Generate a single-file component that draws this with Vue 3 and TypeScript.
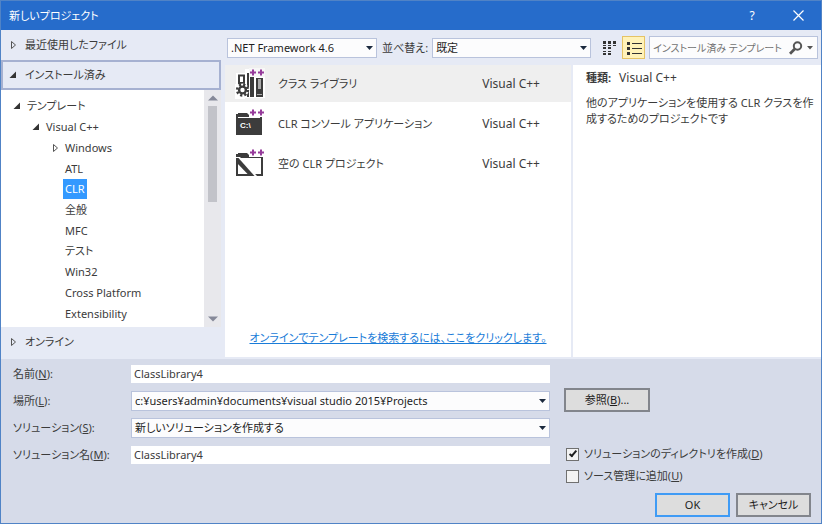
<script setup lang="ts">
import { ref } from 'vue'

interface TreeNode {
  label: string
  depth: number
  state?: 'open' | 'closed'
}

interface Template {
  name: string
  language: string
  icon: 'library' | 'console' | 'empty'
}

const nodes: TreeNode[] = [
  { label: 'テンプレート', depth: 0, state: 'open' },
  { label: 'Visual C++', depth: 1, state: 'open' },
  { label: 'Windows', depth: 2, state: 'closed' },
  { label: 'ATL', depth: 2 },
  { label: 'CLR', depth: 2 },
  { label: '全般', depth: 2 },
  { label: 'MFC', depth: 2 },
  { label: 'テスト', depth: 2 },
  { label: 'Win32', depth: 2 },
  { label: 'Cross Platform', depth: 2 },
  { label: 'Extensibility', depth: 2 },
]

const templates: Template[] = [
  { name: 'クラス ライブラリ', language: 'Visual C++', icon: 'library' },
  { name: 'CLR コンソール アプリケーション', language: 'Visual C++', icon: 'console' },
  { name: '空の CLR プロジェクト', language: 'Visual C++', icon: 'empty' },
]

const selectedNode = ref('CLR')
const selectedTemplate = ref(0)
const query = ref('')
const projectName = ref('ClassLibrary4')
const solutionName = ref('ClassLibrary4')
const createDirectory = ref(true)
const addToSourceControl = ref(false)
</script>

<template>
  <div class="dialog">
    <header class="titlebar">
      <h1>新しいプロジェクト</h1>
      <button type="button" class="caption" aria-label="ヘルプ">?</button>
      <button type="button" class="caption" aria-label="閉じる">
        <svg width="11" height="11" viewBox="0 0 11 11"><path d="M.5.5l10 10M10.5.5l-10 10" stroke="#fff" stroke-width="1.2" /></svg>
      </button>
    </header>

    <main class="body">
      <nav class="side">
        <button type="button" class="section">
          <svg class="arrow" viewBox="0 0 8 8"><path d="M2.500 .5v7l4-3.500z" fill="none" stroke="#555" /></svg>
          最近使用したファイル
        </button>
        <button type="button" class="section current">
          <svg class="arrow" viewBox="0 0 8 8"><path d="M7 .5V7H.5z" fill="#333" /></svg>
          インストール済み
        </button>
        <div class="tree-box">
          <ul class="tree">
            <li v-for="node in nodes" :key="node.label" :class="'depth' + node.depth">
              <svg class="arrow" viewBox="0 0 8 8">
                <path v-if="node.state === 'open'" d="M7 .5V7H.5z" fill="#333" />
                <path v-else-if="node.state === 'closed'" d="M2.500 .5v7l4-3.500z" fill="none" stroke="#555" />
              </svg>
              <button type="button" class="node" :class="{ selected: selectedNode === node.label }" @click="selectedNode = node.label">{{ node.label }}</button>
            </li>
          </ul>
          <div class="scrollbar">
            <svg width="10" height="6" viewBox="0 0 10 6"><path d="M0 5.500L5 .5l5 5z" fill="#868999" /></svg>
            <div class="track"><div class="thumb"></div></div>
            <svg width="10" height="6" viewBox="0 0 10 6"><path d="M0 .5l5 5 5-5z" fill="#868999" /></svg>
          </div>
        </div>
        <button type="button" class="section">
          <svg class="arrow" viewBox="0 0 8 8"><path d="M2.500 .5v7l4-3.500z" fill="none" stroke="#555" /></svg>
          オンライン
        </button>
      </nav>

      <div class="content">
        <div class="toolbar">
          <div class="combo framework">
            <select aria-label="フレームワーク"><option>.NET Framework 4.6</option></select>
            <svg class="drop" viewBox="0 0 7 4"><path d="M0 0h7L3.500 4z" /></svg>
          </div>
          <label for="sort">並べ替え:</label>
          <div class="combo sort">
            <select id="sort"><option>既定</option></select>
            <svg class="drop" viewBox="0 0 7 4"><path d="M0 0h7L3.500 4z" /></svg>
          </div>
          <button type="button" class="view" aria-label="小さいアイコン">
            <svg width="16" height="16" viewBox="0 0 16 16" fill="#333">
              <path d="M2 1h3v3H2zM7 1h3v3H7zM12 1h3v3h-3zM2 7h3v2H2zM7 7h3v2H7zM2 11h3v1H2zM7 11h3v1H7zM2 13h3v2H2zM7 13h3v2H7zM2 5h3v1H2zM7 5h3v1H7zM12 5h3v1h-3z" />
            </svg>
          </button>
          <button type="button" class="view active" aria-label="一覧">
            <svg width="16" height="16" viewBox="0 0 16 16" fill="#333">
              <path d="M1 2h3v3H1zM1 7h3v3H1zM1 12h3v3H1zM6 3h10v1H6zM6 8h10v1H6zM6 13h10v1H6z" />
            </svg>
          </button>
          <div class="search">
            <input v-model="query" type="text" aria-label="テンプレートの検索" placeholder="インストール済み テンプレート" />
            <svg width="14" height="14" viewBox="0 0 14 14" fill="none" stroke="#555"><circle cx="8.500" cy="5" r="3.700" stroke-width="2" /><path d="M5.700 8L1 12.700" stroke-width="2.800" /></svg>
            <svg class="more" viewBox="0 0 7 4"><path d="M0 0h6L3 3.500z" fill="#555" /></svg>
          </div>
        </div>

        <div class="panes">
          <section class="list">
            <button
              v-for="(item, i) in templates"
              :key="item.name"
              type="button"
              class="item"
              :class="{ selected: selectedTemplate === i }"
              @click="selectedTemplate = i"
            >
              <svg class="icon" viewBox="0 0 32 32">
                <g v-if="item.icon === 'library'">
                  <path d="M1 5h9V1h20v29H10v1H0V16h1z" fill="#fff" />
                  <path d="M4 7.500h5V15H4z" fill="#fff" stroke="#3c3c3c" stroke-width="2" />
                  <path d="M12 5h2v24h-2zM15 4h4v25h-4z" fill="#3c3c3c" />
                  <path d="M21 10h7v19h-7z" fill="#3c3c3c" />
                  <path d="M23 11h3v10h-3zM22 26h5v1h-5z" fill="#aaa" />
                  <circle cx="7.500" cy="22" r="6.500" fill="#fff" />
                  <circle cx="7.500" cy="22" r="5.400" fill="none" stroke="#3c3c3c" stroke-width="2.500" stroke-dasharray="2.200 2.040" />
                  <circle cx="7.500" cy="22" r="3.400" fill="none" stroke="#3c3c3c" stroke-width="2.400" />
                </g>
                <g v-else-if="item.icon === 'console'">
                  <path d="M1 6h2V5h9l2 2h13v20H1z" fill="#3c3c3c" />
                  <path d="M3 9.500h22" stroke="#fff" />
                  <text x="5" y="20" class="prompt">C:\</text>
                </g>
                <g v-else>
                  <path d="M1 6h2V5h9l2 2h14v21H1z" fill="#3c3c3c" />
                  <path d="M3 10h23v16H3z" fill="#fff" />
                  <path d="M1 9l4 0 17 19h-4L1 12z" fill="#fff" />
                  <path d="M1 10h2.500l16 18h-5L1 14z" fill="#3c3c3c" />
                </g>
                <path d="M14 0h16v9H14z" :fill="selectedTemplate === i ? '#f7f7f7' : '#fff'" />
                <path d="M15 4.500h6M18 1.500v6M23 4.500h6M26 1.500v6" stroke="#963b9b" stroke-width="2" />
              </svg>
              <span class="name">{{ item.name }}</span>
              <span class="language">{{ item.language }}</span>
            </button>
            <a href="#online" class="online">オンラインでテンプレートを検索するには、ここをクリックします。</a>
          </section>
          <section class="details">
            <p><strong>種類:</strong><span class="language">Visual C++</span></p>
            <p class="description">他のアプリケーションを使用する CLR クラスを作成するためのプロジェクトです</p>
          </section>
        </div>
      </div>
    </main>

    <footer class="footer">
      <div class="form">
        <label for="name">名前(<u>N</u>):</label>
        <input id="name" v-model="projectName" type="text" class="field" />
        <label for="location">場所(<u>L</u>):</label>
        <div class="combo">
          <select id="location"><option>c:¥users¥admin¥documents¥visual studio 2015¥Projects</option></select>
          <svg class="drop" viewBox="0 0 7 4"><path d="M0 0h7L3.500 4z" /></svg>
        </div>
        <label for="solution">ソリューション(<u>S</u>):</label>
        <div class="combo">
          <select id="solution"><option>新しいソリューションを作成する</option></select>
          <svg class="drop" viewBox="0 0 7 4"><path d="M0 0h7L3.500 4z" /></svg>
        </div>
        <label for="solution-name">ソリューション名(<u>M</u>):</label>
        <input id="solution-name" v-model="solutionName" type="text" class="field" />
      </div>
      <div class="options">
        <button type="button" class="push browse">参照(<u>B</u>)...</button>
        <label class="check"><input v-model="createDirectory" type="checkbox" /><span>ソリューションのディレクトリを作成(<u>D</u>)</span></label>
        <label class="check"><input v-model="addToSourceControl" type="checkbox" /><span>ソース管理に追加(<u>U</u>)</span></label>
        <div class="actions">
          <button type="button" class="push default">OK</button>
          <button type="button" class="push">キャンセル</button>
        </div>
      </div>
    </footer>
  </div>
</template>

<style>
body {
  margin: 0;
}
</style>

<style scoped>
.dialog {
  box-sizing: border-box;
  display: flex;
  flex-direction: column;
  min-height: 100vh;
  border: 1px solid #5083c6;
  background: #e6eaf5;
  color: #3b3b3b;
  font-family: "Noto Sans", "Noto Sans CJK JP", sans-serif;
  font-size: 11px;
  font-feature-settings: "palt", "kern";
  line-height: 16px;
}
.dialog *,
.dialog *::before {
  box-sizing: border-box;
}
button,
input,
select {
  margin: 0;
  padding: 0;
  border: 0;
  background: none;
  color: inherit;
  font: inherit;
  font-feature-settings: inherit;
}
svg {
  display: block;
  flex: none;
}
.titlebar {
  display: flex;
  align-items: center;
  height: 29px;
  padding-left: 8px;
  background: #266ccb;
  color: #fff;
}
h1 {
  flex: 1;
  margin: 0;
  font-size: 11px;
  font-weight: 400;
}
.caption {
  display: flex;
  align-items: center;
  justify-content: center;
  width: 46px;
  height: 29px;
  font-size: 12px;
}
.body {
  display: flex;
  flex: 1;
}
.side {
  display: flex;
  flex-direction: column;
  flex: none;
  width: 220px;
  margin: 0 4px 2px 0;
}
.section {
  display: flex;
  align-items: center;
  gap: 8px;
  height: 30px;
  padding: 0 8px;
  text-align: left;
}
.section.current {
  padding: 0 6px;
  border: 2px solid #a6b1d1;
}
.arrow {
  width: 8px;
  height: 8px;
}
.tree-box {
  display: flex;
  flex: 1;
  background: #fff;
}
.tree {
  display: grid;
  grid-auto-rows: 1fr;
  flex: 1;
  margin: 0;
  padding: 6px 0 3px;
  list-style: none;
}
.tree li {
  display: flex;
  align-items: center;
  gap: 4px;
}
.depth0 {
  padding-left: 12px;
}
.depth1 {
  padding-left: 31px;
}
.depth2 {
  padding-left: 50px;
}
.node {
  padding: 2px;
}
.node.selected {
  background: #3399ff;
  color: #fff;
}
.scrollbar {
  display: flex;
  flex-direction: column;
  align-items: center;
  gap: 5px;
  width: 17px;
  padding: 5px 0;
  background: #e8e8ec;
}
.track {
  flex: 1;
  width: 9px;
}
.thumb {
  height: 47%;
  background: #c2c3c9;
}
.content {
  display: flex;
  flex: 1;
  flex-direction: column;
  min-width: 0;
}
.toolbar {
  display: flex;
  align-items: center;
  height: 35px;
  padding: 0 3px 0 2px;
}
.combo {
  display: grid;
  align-items: center;
  height: 20px;
  border: 1px solid #b9c3dc;
  background: #fcfcfd;
  color: #1e1e1e;
}
.combo > * {
  grid-area: 1 / 1;
}
.combo select {
  width: 100%;
  height: 18px;
  padding: 0 18px 0 3px;
  appearance: none;
}
.drop {
  justify-self: end;
  width: 7px;
  height: 4px;
  margin-right: 3px;
  fill: #1b293e;
  pointer-events: none;
}
.framework {
  width: 150px;
  margin-right: 5px;
}
.sort {
  flex: 1;
  margin: 0 6px 0 4px;
}
.view {
  display: flex;
  align-items: center;
  justify-content: center;
  flex: none;
  width: 23px;
  height: 23px;
  margin-right: 2px;
}
.view.active {
  margin-right: 4px;
  border: 1px solid #e5c365;
  background: #fff2b8;
}
.search {
  display: flex;
  align-items: center;
  gap: 4px;
  flex: none;
  width: 169px;
  height: 23px;
  padding: 0 3px;
  border: 1px solid #b9c3dc;
  background: #fcfcfd;
}
.search input {
  flex: 1;
  min-width: 0;
  font-size: 10px;
}
.search input::placeholder {
  color: #717171;
  opacity: 1;
}
.more {
  width: 7px;
  height: 4px;
}
.panes {
  display: grid;
  grid-template-columns: minmax(0, 346fr) minmax(0, 248fr);
  flex: 1;
  gap: 2px;
  margin-bottom: 2px;
}
.list {
  display: flex;
  flex-direction: column;
  background: #fff;
}
.item {
  display: flex;
  align-items: center;
  height: 40px;
  padding: 0 31px 0 10px;
  text-align: left;
}
.item.selected {
  height: 37px;
  margin-bottom: 2px;
  background: #efefef;
}
.icon {
  width: 32px;
  height: 32px;
  margin-right: 11px;
}
.prompt {
  fill: #fff;
  font: bold 8px "Liberation Sans", sans-serif;
}
.name {
  flex: 1;
}
.language {
  font-size: 12px;
}
.online {
  align-self: center;
  margin: auto 0 11px;
  color: #1a7cd8;
}
.details {
  padding: 5px 6px 0 13px;
  background: #fff;
}
p {
  margin: 0;
}
strong {
  margin-right: 8px;
}
.description {
  margin-top: 9px;
}
.footer {
  display: flex;
  gap: 14px;
  padding: 0 10px 6px 12px;
  background: #d6dbe9;
}
.form {
  display: grid;
  grid-template-columns: 118px 1fr;
  grid-auto-rows: 27px;
  align-items: center;
  align-content: start;
  flex: 1;
  padding-top: 1px;
}
.field {
  width: 100%;
  height: 18px;
  padding: 0 3px;
  background: #fff;
}
.options {
  display: flex;
  flex-direction: column;
  align-items: flex-start;
  flex: none;
  width: 247px;
  padding-top: 29px;
}
.push {
  width: 75px;
  height: 24px;
  border: 2px solid #82858c;
  background: #dddddd;
  color: #1e1e1e;
}
.browse {
  width: 86px;
  margin-bottom: 31px;
}
.default {
  border-color: #3f9bf5;
}
.check {
  display: flex;
  align-items: center;
  gap: 5px;
  height: 22px;
  padding-left: 2px;
  white-space: nowrap;
}
.check input {
  display: grid;
  place-items: center;
  flex: none;
  width: 13px;
  height: 13px;
  border: 1px solid #707070;
  background: #f3f3f3;
  appearance: none;
}
.check input:checked::before {
  width: 4px;
  height: 8px;
  margin-bottom: 2px;
  border: solid #1e1e1e;
  border-width: 0 2px 2px 0;
  transform: rotate(40deg);
  content: "";
}
.actions {
  display: flex;
  gap: 6px;
  margin-top: 6px;
  margin-left: auto;
}
</style>
